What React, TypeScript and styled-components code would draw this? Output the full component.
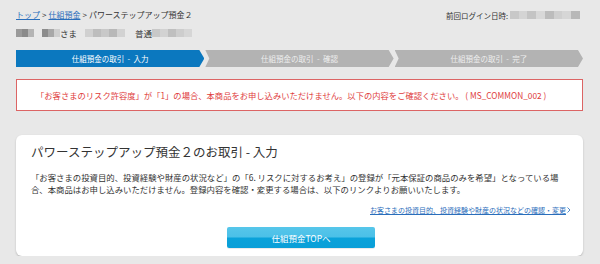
import React from "react";
import styled, { createGlobalStyle } from "styled-components";

const Global = createGlobalStyle`
  html, body { margin: 0; padding: 0; background: #e8e8e8; }
  body {
    font-family: "Noto Sans CJK JP", "Noto Sans", sans-serif;
    color: #333;
  }
`;

const Page = styled.div`
  width: 567px;
  margin-left: 16px;
  padding-top: 9px;
`;

const TopRow = styled.div`
  display: flex;
  justify-content: space-between;
  align-items: center;
  height: 12px;
  padding-right: 3px;
`;

const Crumbs = styled.div`
  font-size: 8px;
  line-height: 12px;
  color: #333;
  white-space: nowrap;
`;

const CrumbLink = styled.a`
  color: #2a6ebb;
  text-decoration: underline;
`;

const Sep = styled.span`
  margin: 0 2px;
`;

const LoginInfo = styled.div`
  display: flex;
  align-items: center;
  font-size: 7.5px;
  color: #333;
  gap: 2px;
`;

const Mosaic = styled.span<{ $w: number; $colors: string[] }>`
  display: inline-block;
  width: ${(p) => p.$w}px;
  height: 8px;
  filter: blur(0.7px);
  background: ${(p) => {
    const n = p.$colors.length;
    const stops = p.$colors
      .map((c, i) => `${c} ${(i * 100) / n}%, ${c} ${((i + 1) * 100) / n}%`)
      .join(", ");
    return `linear-gradient(90deg, ${stops})`;
  }};
`;

const NameRow = styled.div`
  display: flex;
  align-items: center;
  height: 12px;
  margin-top: 6px;
  font-size: 8.5px;
`;

const NameGroup = styled.span<{ $ml: number }>`
  display: inline-flex;
  align-items: center;
  margin-left: ${(p) => p.$ml}px;
`;

const Steps = styled.div`
  display: flex;
  gap: 1px;
  margin-top: 11px;
`;

const Step = styled.div<{ $active?: boolean; $first?: boolean }>`
  flex: 1;
  height: 17px;
  display: flex;
  align-items: center;
  justify-content: center;
  font-size: 7.5px;
  white-space: pre;
  background: ${(p) => (p.$active ? "#0b78bf" : "#b3b3b3")};
  color: ${(p) => (p.$active ? "#ffffff" : "#eeeeee")};
  clip-path: ${(p) =>
    p.$first
      ? "polygon(0 0, calc(100% - 5px) 0, 100% 50%, calc(100% - 5px) 100%, 0 100%)"
      : "polygon(0 0, calc(100% - 5px) 0, 100% 50%, calc(100% - 5px) 100%, 0 100%, 4px 50%)"};
`;

const ErrorBox = styled.div`
  margin-top: 12px;
  height: 32px;
  box-sizing: border-box;
  border: 1px solid #dc6464;
  background: #fff;
  display: flex;
  align-items: center;
  padding-left: 19px;
  font-size: 8.3px;
  color: #e03c3c;
  white-space: nowrap;
`;

const Card = styled.div`
  margin-top: 24px;
  background: #fff;
  border-radius: 6px;
  box-shadow: 0 1px 2px rgba(0, 0, 0, 0.22);
  padding: 9px 12px 8px 15px;
`;

const Title = styled.h1`
  margin: 0;
  font-size: 12.5px;
  line-height: 16px;
  font-weight: 400;
  color: #333;
`;

const Para = styled.p`
  margin: 11px 0 0;
  font-size: 8.4px;
  line-height: 12px;
  color: #333;
`;

const LinkRow = styled.div`
  display: flex;
  justify-content: flex-end;
  margin-top: 9px;
  height: 12px;
  align-items: center;
`;

const InfoLink = styled.a`
  font-size: 7px;
  color: #2a6ebb;
  text-decoration: underline;
  display: inline-flex;
  align-items: center;
  gap: 1px;
`;

const ButtonRow = styled.div`
  display: flex;
  justify-content: center;
  margin-top: 11px;
`;

const TopButton = styled.button`
  width: 148px;
  height: 21px;
  border: none;
  border-radius: 2px;
  background: linear-gradient(180deg, #56c6ea 0%, #4bc0e8 48%, #0aa2da 52%, #0a9fd8 100%);
  color: #fff;
  font-family: inherit;
  font-size: 8.5px;
  padding: 0;
  box-shadow: 0 1px 0 rgba(0, 0, 0, 0.08);
`;

export default function App() {
  return (
    <>
      <Global />
      <Page>
        <TopRow>
          <Crumbs>
            <CrumbLink>トップ</CrumbLink>
            <Sep>&gt;</Sep>
            <CrumbLink>仕組預金</CrumbLink>
            <Sep>&gt;</Sep>
            パワーステップアップ預金２
          </Crumbs>
          <LoginInfo>
            前回ログイン日時:
            <Mosaic
              $w={70}
              $colors={["#c8c8c8", "#d4d4d4", "#c4c4c4", "#d8d8d8", "#bcbcbc", "#cfcfcf", "#d6d6d6", "#b8b8b8"]}
            />
          </LoginInfo>
        </TopRow>
        <NameRow>
          <Mosaic $w={18} $colors={["#9a9a9a", "#8a8a8a", "#b4b4b4"]} />
          <NameGroup $ml={8}>
            <Mosaic $w={18} $colors={["#8c8c8c", "#a8a8a8", "#cfcfcf"]} />
            さま
          </NameGroup>
          <NameGroup $ml={8}>
            <Mosaic $w={40} $colors={["#d0d0d0", "#bdbdbd", "#c8c8c8", "#b8b8b8", "#d2d2d2"]} />
          </NameGroup>
          <NameGroup $ml={10}>
            普通
            <Mosaic $w={40} $colors={["#c8c8c8", "#d2d2d2", "#bfbfbf", "#cdcdcd", "#d6d6d6"]} />
          </NameGroup>
        </NameRow>
        <Steps>
          <Step $active $first>仕組預金の取引  -  入力</Step>
          <Step>仕組預金の取引  -  確認</Step>
          <Step>仕組預金の取引  -  完了</Step>
        </Steps>
        <ErrorBox>
          「お客さまのリスク許容度」が「1」の場合、本商品をお申し込みいただけません。以下の内容をご確認ください。 ( MS_COMMON_002 )
        </ErrorBox>
        <Card>
          <Title>パワーステップアップ預金２のお取引 - 入力</Title>
          <Para>
            「お客さまの投資目的、投資経験や財産の状況など」の「6. リスクに対するお考え」の登録が「元本保証の商品のみを希望」となっている場合、本商品はお申し込みいただけません。登録内容を確認・変更する場合は、以下のリンクよりお願いいたします。
          </Para>
          <LinkRow>
            <InfoLink>
              お客さまの投資目的、投資経験や財産の状況などの確認・変更
              <svg width="4" height="6" viewBox="0 0 4 6">
                <path d="M0.5 0.5 L3 3 L0.5 5.5" fill="none" stroke="#2a6ebb" strokeWidth="0.8" />
              </svg>
            </InfoLink>
          </LinkRow>
          <ButtonRow>
            <TopButton>仕組預金TOPへ</TopButton>
          </ButtonRow>
        </Card>
      </Page>
    </>
  );
}
